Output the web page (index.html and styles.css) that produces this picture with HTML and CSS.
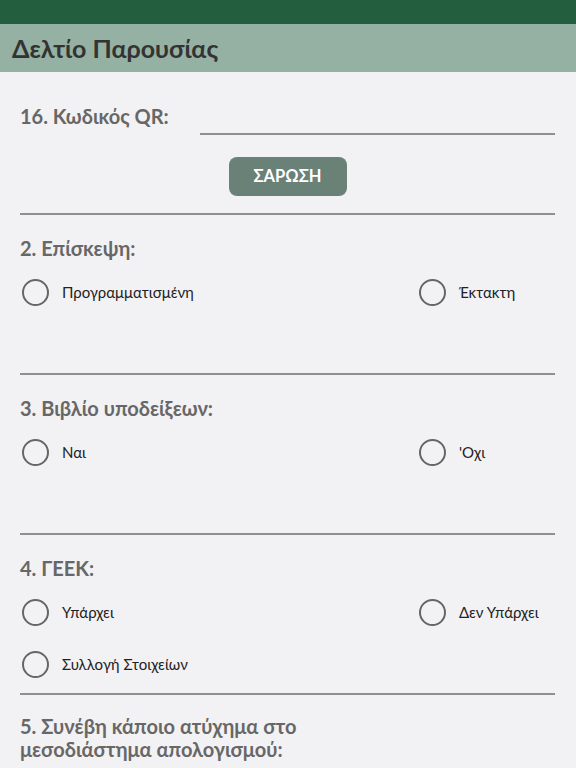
FILE: index.html
```html
<!DOCTYPE html>
<html>
	<head>
		<meta charset="utf-8" />
		<title>Δελτίο Παρουσίας</title>
		<link rel="stylesheet" href="styles.css">
	</head>
	<body>
		<div class="status-bar"></div>
		<div class="app-bar">Δελτίο Παρουσίας</div>
		<div class="form">
			<div class="section qr">
				<div class="qr-row">
					<div class="q-title">16. Κωδικός QR:</div>
					<div class="qr-input"></div>
				</div>
				<div class="btn-row"><a class="btn" href="javascript:;">ΣΑΡΩΣΗ</a></div>
			</div>
			<div class="section">
				<div class="q-title">2. Επίσκεψη:</div>
				<div class="options">
					<label class="opt"><span class="radio"></span>Προγραμματισμένη</label>
					<label class="opt"><span class="radio"></span>Έκτακτη</label>
				</div>
			</div>
			<div class="section">
				<div class="q-title">3. Βιβλίο υποδείξεων:</div>
				<div class="options">
					<label class="opt"><span class="radio"></span>Ναι</label>
					<label class="opt"><span class="radio"></span>'Οχι</label>
				</div>
			</div>
			<div class="section">
				<div class="q-title">4. ΓΕΕΚ:</div>
				<div class="options">
					<label class="opt"><span class="radio"></span>Υπάρχει</label>
					<label class="opt"><span class="radio"></span>Δεν Υπάρχει</label>
					<label class="opt"><span class="radio"></span>Συλλογή Στοιχείων</label>
				</div>
			</div>
			<div class="section last">
				<div class="q-title">5. Συνέβη κάποιο ατύχημα στο<br>μεσοδιάστημα απολογισμού:</div>
			</div>
		</div>
	</body>
</html>
```

FILE: styles.css
```css
html,body{margin:0;padding:0}
body{
	background:#f2f1f4;
	font-family:Lato,"Open Sans","Noto Sans",sans-serif;
	width:576px;
	height:768px;
	overflow:hidden;
}
.status-bar{
	height:24px;
	background:#235e3e;
}
.app-bar{
	height:48px;
	line-height:48px;
	background:#94b1a3;
	color:#333;
	font-size:25px;
	font-weight:bold;
	padding-left:12px;
}
.form{
	padding:0 21px 0 20px;
}
.section{
	border-bottom:2px solid #8f8f8f;
	padding-top:22px;
	padding-bottom:3px;
}
.section.last{
	border-bottom:none;
	padding-top:20px;
}
.q-title{
	font-size:20px;
	font-weight:bold;
	color:#676767;
	line-height:23px;
}
.options{
	display:grid;
	grid-template-columns:1fr 138px;
	grid-auto-rows:52px;
	min-height:104px;
	margin-top:6px;
}
.opt{
	display:flex;
	align-items:center;
	font-size:15px;
	color:#222;
}
.radio{
	width:23px;
	height:23px;
	border:2px solid #666;
	border-radius:50%;
	margin:0 13px 0 2px;
}
.section.qr{
	padding-top:32px;
	padding-bottom:17px;
}
.qr-row{
	display:grid;
	grid-template-columns:180px 1fr;
}
.qr-row .q-title{
	line-height:24px;
}
.qr-input{
	height:29px;
	border-bottom:2px solid #8f8f8f;
}
.btn-row{
	display:flex;
	justify-content:center;
	margin-top:22px;
}
.btn{
	width:118px;
	height:39px;
	line-height:39px;
	text-align:center;
	background:#6a8178;
	color:#fff;
	font-size:16.5px;
	font-weight:bold;
	border-radius:8px;
	text-decoration:none;
}
```
